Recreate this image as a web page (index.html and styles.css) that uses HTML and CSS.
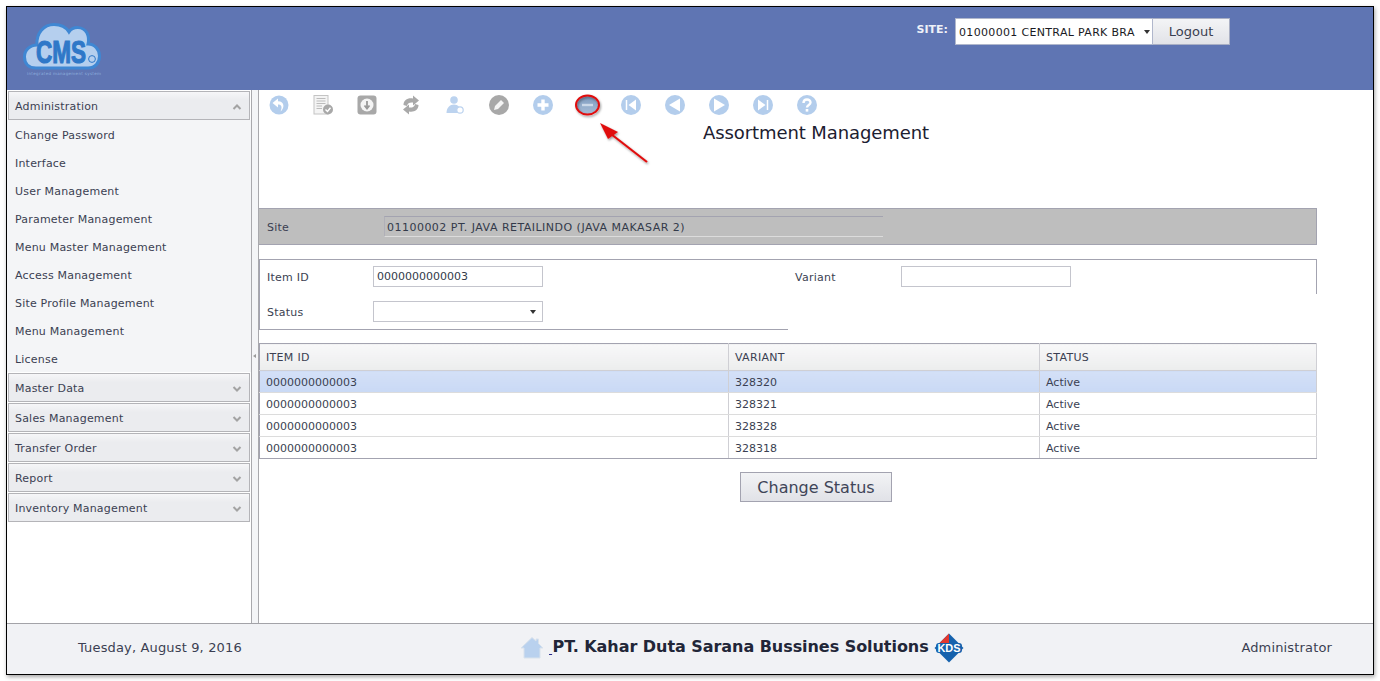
FILE: index.html
```html
<!DOCTYPE html>
<html lang="en">
<head>
<meta charset="utf-8">
<title>Assortment Management</title>
<link rel="stylesheet" href="styles.css">
</head>
<body>
<div class="frame">
  <header class="topbar">
    <svg class="logo" width="90" height="58" viewBox="0 0 90 58">
      <path d="M13 45 C5 45 1.500 40 1.500 34 C1.500 27 7 22 14 22 C13 10 21 1.500 31 1.500 C38 1.500 43 4 46 9 C50 3 60 3 64 10 C66 14 66 17 65 21 C72 21 76.500 27 76.500 33 C76.500 40 72 45 65 45 Z" fill="#b5cfee" stroke="#3f87d3" stroke-width="3"/>
      <text x="38" y="40" class="logo-text" textLength="50" lengthAdjust="spacingAndGlyphs">CMS</text>
      <circle cx="69" cy="36" r="3.400" fill="#b5cfee" stroke="#2f78c8" stroke-width="1"/>
      <text x="41" y="52" class="logo-sub" textLength="74" lengthAdjust="spacing">integrated management system</text>
    </svg>
    <div class="site-picker">
      <span class="site-label">SITE:</span>
      <div class="site-select"><span class="site-value">01000001 CENTRAL PARK BRA</span><i class="caret"></i></div>
      <button class="logout" type="button">Logout</button>
    </div>
  </header>

  <div class="middle">
    <nav class="sidebar">
      <div class="acc-head"><span>Administration</span><svg class="chev" width="10" height="6" viewBox="0 0 10 6"><path d="M1.500 5 L5 1.500 L8.500 5" /></svg></div>
      <ul class="acc-list">
        <li>Change Password</li>
        <li>Interface</li>
        <li>User Management</li>
        <li>Parameter Management</li>
        <li>Menu Master Management</li>
        <li>Access Management</li>
        <li>Site Profile Management</li>
        <li>Menu Management</li>
        <li>License</li>
      </ul>
      <div class="acc-head"><span>Master Data</span><svg class="chev" width="10" height="6" viewBox="0 0 10 6"><path d="M1.500 1 L5 4.500 L8.500 1" /></svg></div>
      <div class="acc-head"><span>Sales Management</span><svg class="chev" width="10" height="6" viewBox="0 0 10 6"><path d="M1.500 1 L5 4.500 L8.500 1" /></svg></div>
      <div class="acc-head"><span>Transfer Order</span><svg class="chev" width="10" height="6" viewBox="0 0 10 6"><path d="M1.500 1 L5 4.500 L8.500 1" /></svg></div>
      <div class="acc-head"><span>Report</span><svg class="chev" width="10" height="6" viewBox="0 0 10 6"><path d="M1.500 1 L5 4.500 L8.500 1" /></svg></div>
      <div class="acc-head"><span>Inventory Management</span><svg class="chev" width="10" height="6" viewBox="0 0 10 6"><path d="M1.500 1 L5 4.500 L8.500 1" /></svg></div>
    </nav>
    <div class="splitter"><i class="split-arrow"></i></div>

    <main class="content">
      <div class="toolbar">
        <svg class="tool" viewBox="0 0 20 20"><circle cx="10" cy="10" r="9.500" fill="#b3cdec"/><path d="M9 3.500 L3.500 8 L9 12.500 V9.500 C12.500 9.500 13.500 12 11.500 16.500 C15.500 13.500 16 6.300 9 6.300 Z" fill="#fff"/></svg>
        <svg class="tool" viewBox="0 0 20 20"><rect x="1" y="0.500" width="14" height="18.500" fill="#f4f4f4" stroke="#c4c4c4"/><path d="M3.500 3.500H12.500M3.500 6H12.500M3.500 8.500H12.500M3.500 11H9M3.500 13.500H9" stroke="#bcbcbc" stroke-width="1"/><circle cx="15" cy="14.500" r="5" fill="#a8a8a8"/><path d="M12.500 14.500 L14.500 16.500 L17.500 12.800" stroke="#fff" stroke-width="1.400" fill="none"/></svg>
        <svg class="tool" viewBox="0 0 20 20"><rect x="0.500" y="0.500" width="19" height="19" rx="3" fill="#a8a8a8"/><circle cx="10" cy="10" r="6.500" fill="#f4f4f4"/><path d="M10 6 V12.500 M7.500 10.500 L10 13.500 L12.500 10.500" stroke="#999" stroke-width="1.800" fill="none"/></svg>
        <svg class="tool" viewBox="0 0 20 20"><path d="M2.500 10 C2.500 5 7 2.500 12 3.500 V0.500 L18 5.500 L12 10.500 V7.500 C9 7 6.500 8 6 11 Z" fill="#a9a9a9"/><path d="M17.500 10 C17.500 15 13 17.500 8 16.500 V19.500 L2 14.500 L8 9.500 V12.500 C11 13 13.500 12 14 9 Z" fill="#a9a9a9"/></svg>
        <svg class="tool" viewBox="0 0 20 20"><circle cx="9" cy="5" r="3.800" fill="#bcd3ef"/><path d="M1.500 18 C1.500 12.500 5 9.500 9 9.500 C13 9.500 16 12.500 16 18 Z" fill="#bcd3ef"/><circle cx="15" cy="15" r="3.200" fill="#fff" stroke="#bcd3ef" stroke-width="1.200"/></svg>
        <svg class="tool" viewBox="0 0 20 20"><circle cx="10" cy="10" r="10" fill="#a8a8a8"/><path d="M5 15 L6 11 L12 5 L15 8 L9 14 Z" fill="#f4f4f4"/></svg>
        <svg class="tool" viewBox="0 0 20 20"><circle cx="10" cy="10" r="10" fill="#b3cdec"/><path d="M10 4.500 V15.500 M4.500 10 H15.500" stroke="#fff" stroke-width="3.400"/></svg>
        <svg class="tool" viewBox="0 0 20 20"><circle cx="10" cy="10" r="10" fill="#b3cdec"/><path d="M4.500 10 H15.500" stroke="#fff" stroke-width="3"/></svg>
        <svg class="tool" viewBox="0 0 20 20"><circle cx="10" cy="10" r="10" fill="#b3cdec"/><path d="M5.500 5 V15" stroke="#fff" stroke-width="1.500"/><path d="M15 4.500 V15.500 L7.500 10 Z" fill="#fff"/></svg>
        <svg class="tool" viewBox="0 0 20 20"><circle cx="10" cy="10" r="10" fill="#b3cdec"/><path d="M15 3.500 V16.500 L4 10 Z" fill="#fff"/></svg>
        <svg class="tool" viewBox="0 0 20 20"><circle cx="10" cy="10" r="10" fill="#b3cdec"/><path d="M5 3.500 V16.500 L16 10 Z" fill="#fff"/></svg>
        <svg class="tool" viewBox="0 0 20 20"><circle cx="10" cy="10" r="10" fill="#b3cdec"/><path d="M14.500 5 V15" stroke="#fff" stroke-width="1.500"/><path d="M5 4.500 V15.500 L12.500 10 Z" fill="#fff"/></svg>
        <svg class="tool" viewBox="0 0 20 20"><circle cx="10" cy="10" r="10" fill="#b3cdec"/><path d="M6.500 8 C6.500 3.500 13.500 3.500 13.500 7.500 C13.500 10 10 10 10 12.500" fill="none" stroke="#fff" stroke-width="2.400"/><rect x="8.700" y="14" width="2.600" height="2.600" fill="#fff"/></svg>
      </div>
      <svg class="annotation" width="90" height="80" viewBox="0 0 90 80">
        <defs>
          <filter id="soft" x="-20%" y="-20%" width="150%" height="150%"><feDropShadow dx="1" dy="1.500" stdDeviation="1.200" flood-color="#000" flood-opacity="0.400"/></filter>
          <linearGradient id="minus" x1="0" y1="0" x2="0" y2="1"><stop offset="0" stop-color="#7f9cc0"/><stop offset="1" stop-color="#a6bbd5"/></linearGradient>
        </defs>
        <ellipse cx="18.500" cy="15" rx="11" ry="9" fill="url(#minus)"/>
        <path d="M13 15 H24" stroke="#cbd8e8" stroke-width="2.400"/>
        <g filter="url(#soft)">
          <ellipse cx="18.500" cy="15" rx="11.500" ry="9.500" fill="none" stroke="#e01010" stroke-width="2"/>
          <path d="M78 72 L42 44" stroke="#e01010" stroke-width="2.200"/>
          <path d="M31 33 L49 42 L39 49 Z" fill="#e01010"/>
        </g>
      </svg>
      <h1 class="title">Assortment Management</h1>

      <section class="site-bar">
        <span class="field-label">Site</span>
        <div class="site-readonly">01100002 PT. JAVA RETAILINDO (JAVA MAKASAR 2)</div>
      </section>

      <section class="filter-top">
        <span class="field-label">Item ID</span>
        <input class="text-input" type="text" value="0000000000003">
        <span class="field-label variant-label">Variant</span>
        <input class="text-input" type="text" value="">
      </section>
      <section class="filter-bottom">
        <span class="field-label">Status</span>
        <div class="combo"><i class="caret dark"></i></div>
      </section>

      <table class="grid">
        <thead>
          <tr><th class="col-a">ITEM ID</th><th class="col-b">VARIANT</th><th>STATUS</th></tr>
        </thead>
        <tbody>
          <tr class="selected"><td>0000000000003</td><td>328320</td><td>Active</td></tr>
          <tr><td>0000000000003</td><td>328321</td><td>Active</td></tr>
          <tr><td>0000000000003</td><td>328328</td><td>Active</td></tr>
          <tr class="last"><td>0000000000003</td><td>328318</td><td>Active</td></tr>
        </tbody>
      </table>

      <div class="actions"><button class="primary" type="button">Change Status</button></div>
    </main>
  </div>

  <footer class="footer">
    <span class="date">Tuesday, August 9, 2016</span>
    <div class="brand">
      <svg class="home" width="24" height="24" viewBox="0 0 24 24"><path d="M12 1.500 L1 12 H4 V22 H20 V12 H23 L18.500 7.500 V3 H16 V5 Z" fill="#b9d1ee" stroke="#d9e2ec" stroke-width="1"/></svg>
      <span class="brand-gap">&nbsp;</span>
      <span class="brand-name">PT. Kahar Duta Sarana Bussines Solutions</span>
      <svg class="kds" width="30" height="30" viewBox="0 0 30 30"><path d="M15 0.500 L29.500 15 L15 29.500 L0.500 15 Z" fill="#1662ad"/><path d="M15 0.500 L15 10 H5.500 Z" fill="#e2382f"/><rect x="2" y="10" width="26" height="10" rx="3" fill="#1662ad"/><text x="15" y="19" class="kds-text" textLength="23" lengthAdjust="spacingAndGlyphs">KDS</text></svg>
    </div>
    <span class="user">Administrator</span>
  </footer>
</div>
</body>
</html>
```
FILE: styles.css
```css
* { box-sizing: border-box; }
html, body { margin: 0; padding: 0; height: 100%; overflow: hidden; background: #fff; }
body {
  padding: 6px;
  font-family: "DejaVu Sans", Verdana, sans-serif;
  font-size: 11px;
  color: #333a4a;
}
.frame {
  width: 1368px;
  height: 669px;
  border: 1px solid #000;
  box-shadow: 1px 2px 4px rgba(0,0,0,.35);
  display: flex;
  flex-direction: column;
  background: #fff;
}
.topbar {
  height: 83px;
  flex: none;
  background: #5f75b3;
  display: flex;
  justify-content: space-between;
  align-items: flex-start;
  padding: 11px 143px 0 16px;
}
.logo { margin-top: 5px; }
.logo-text { font-family: "Liberation Sans", sans-serif; font-weight: 700; font-size: 32px; fill: #2f78c8; stroke: #2f78c8; stroke-width: 1.200px; text-anchor: middle; }
.logo-sub { font-family: "DejaVu Sans", sans-serif; font-size: 4px; fill: #8fb0de; text-anchor: middle; }
.site-picker { display: flex; align-items: flex-start; }
.site-label { color: #eef1f8; font-weight: 700; font-size: 11px; margin: 5px 7px 0 0; }
.site-select {
  width: 198px; height: 27px;
  background: #fff;
  border: 1px solid #b0b7cc;
  display: flex; align-items: center; justify-content: space-between;
  padding: 1px 2px 0 3px;
  font-size: 11px;
  letter-spacing: .33px;
  color: #1a1a24;
  white-space: nowrap;
  overflow: hidden;
}
.site-value { width: 178px; overflow: hidden; }
.caret { display: block; width: 0; height: 0; border-left: 3.500px solid transparent; border-right: 3.500px solid transparent; border-top: 4px solid #333; flex: none; }
.logout {
  width: 77px; height: 27px;
  border: 1px solid #a9afc4;
  border-left: 0;
  background: linear-gradient(#f3f4f6, #e2e3e8);
  font: 13px "DejaVu Sans", sans-serif;
  color: #3a4050;
  padding: 0;
}
.middle { flex: 1; display: flex; min-height: 0; position: relative; }
.sidebar {
  width: 244px; flex: none;
  background: #fff;
  padding: 1px 0 0 1px;
  display: flex; flex-direction: column; gap: 1px;
}
.acc-head {
  width: 242px; height: 29px; flex: none;
  border: 1px solid #b4b4b8;
  background: linear-gradient(#f6f6f8, #ebecef 30%, #ebecef);
  display: flex; align-items: center; justify-content: space-between;
  padding: 2px 7px 0 6px;
  letter-spacing: .2px;
  color: #3b3f52;
}
.chev { fill: none; stroke: #a3a3a3; stroke-width: 2; }
.acc-list {
  list-style: none; margin: -1px 0 0 -1px; padding: 2px 0 0 8px;
  background: #f4f5f7;
  width: 244px;
  height: 252px;
  flex: none;
  letter-spacing: .2px;
  color: #3b3f52;
}
.acc-list li { height: 28px; line-height: 28px; }
.splitter {
  width: 8px; flex: none;
  background: #f4f5f7;
  border-left: 1px solid #a9a9ad;
  border-right: 1px solid #a9a9ad;
  position: relative;
  display: flex; align-items: center; justify-content: center;
}
.split-arrow { display: block; width: 0; height: 0; border-top: 2.500px solid transparent; border-bottom: 2.500px solid transparent; border-right: 3px solid #9a9a9a; margin: 0 1px 2px 0; }
.content { flex: 1; position: relative; min-width: 0; display: flex; flex-direction: column; align-items: flex-start; background: #fff; }
.toolbar { display: flex; gap: 24px; padding: 5px 0 0 10px; height: 27px; flex: none; }
.tool { width: 20px; height: 20px; flex: none; }
.annotation { position: absolute; left: 310px; top: 0; }
.title {
  width: 1114px; margin: 5px 0 0;
  text-align: center;
  font-weight: 400;
  font-size: 18px;
  letter-spacing: -.1px;
  line-height: 22px;
  height: 22px;
  color: #1c2030;
  flex: none;
}
.site-bar {
  margin-top: 64px;
  width: 1058px; height: 37px;
  flex: none;
  background: #bebebe;
  border: 1px solid #a3a3b0;
  border-left: 0;
  display: flex; align-items: center;
}
.field-label { color: #3b3f52; letter-spacing: .25px; width: 113px; padding-left: 7px; flex: none; }
.site-bar .field-label { width: 125px; padding-left: 8px; padding-top: 2px; }
.site-readonly {
  width: 499px; height: 21px;
  border-top: 1px solid #a3a3b0;
  border-bottom: 1px solid #dcdcdc;
  border-left: 1px solid #b0b0b8;
  padding: 1px 0 0 2px;
  line-height: 19px;
  color: #333a4a;
  letter-spacing: .48px;
  white-space: nowrap;
}
.filter-top {
  margin-top: 14px;
  width: 1058px; height: 35px;
  flex: none;
  border: 1px solid #a3a3b0;
  border-bottom: 0;
  display: flex; align-items: flex-start;
  padding-top: 6px;
}
.filter-top .field-label { padding-top: 5px; }
.filter-top .variant-label { margin-left: 252px; padding-left: 0; width: 106px; }
.text-input {
  width: 170px; height: 21px;
  border: 1px solid #c4c5cd;
  background: #fff;
  padding: 0 3px;
  font: 11px "DejaVu Sans", sans-serif;
  color: #333a4a;
  flex: none;
  outline: 0;
  border-radius: 0;
}
.filter-bottom {
  width: 529px; height: 36px;
  flex: none;
  border-left: 1px solid #a3a3b0;
  border-bottom: 1px solid #a3a3b0;
  display: flex; align-items: flex-start;
  padding-top: 7px;
}
.filter-bottom .field-label { padding-top: 5px; }
.combo {
  width: 170px; height: 21px;
  border: 1px solid #c4c5cd;
  background: #fff;
  display: flex; align-items: center; justify-content: flex-end;
  padding-right: 6px;
  flex: none;
}
.caret.dark { border-top-color: #333; }
.grid {
  margin-top: 13px;
  width: 1058px;
  flex: none;
  border: 1px solid #a3a3b0;
  border-collapse: collapse;
  table-layout: fixed;
}
.col-a { width: 469px; }
.col-b { width: 311px; }
.grid th {
  height: 27px;
  padding: 0 6px;
  text-align: left;
  font-weight: 400;
  color: #3b3f52;
  letter-spacing: .3px;
  background: linear-gradient(#f8f8f9, #eceded);
  border-right: 1px solid #cfcfd4;
  border-bottom: 1px solid #cfcfd4;
}
.grid td {
  height: 22px;
  padding: 1px 6px 0;
  color: #3b3f52;
  border-right: 1px solid #cfcfd4;
  border-bottom: 1px solid #dcdcdc;
}
.grid .selected td { background: linear-gradient(#d4e0f7, #c9d9f5); }
.grid .last td { border-bottom: 1px solid #a3a3b0; }
.actions { width: 1114px; padding-top: 13px; display: flex; justify-content: center; flex: none; }
.primary {
  width: 152px; height: 30px;
  border: 1px solid #a3a3b0;
  background: linear-gradient(#f2f3f5, #e1e2e7);
  font: 16px "DejaVu Sans", sans-serif;
  color: #3f4558;
  padding: 0;
}
.footer {
  height: 51px; flex: none;
  background: #f1f2f5;
  border-top: 1px solid #a3a3a8;
  display: flex; align-items: center; justify-content: space-between;
  padding: 0 41px 0 71px;
  font-size: 13px;
  color: #333a4a;
}
.date, .user { font-size: 13px; color: #3b3f52; letter-spacing: .15px; margin-bottom: 4px; }
.brand { display: flex; align-items: center; margin-left: 0; }
.home { margin-bottom: 2px; }
.kds { margin-bottom: 2px; }
.brand-gap { width: 4px; margin-left: 5px; text-decoration: underline; color: #2a2a8a; font-size: 11px; align-self: flex-end; margin-bottom: 9px; overflow: hidden; }
.brand-name { font-weight: 700; font-size: 16px; color: #222638; letter-spacing: -.05px; margin: 0 5px 6px 0; }
.kds-text { font-family: "Liberation Sans", sans-serif; font-weight: 700; font-size: 11px; fill: #fff; text-anchor: middle; }
```
